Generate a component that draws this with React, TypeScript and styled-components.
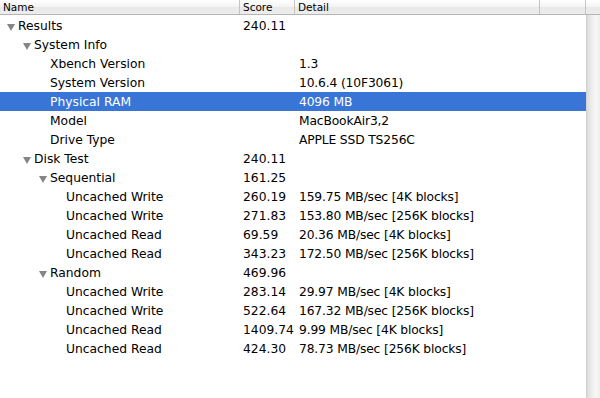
import React from "react";
import styled, { createGlobalStyle } from "styled-components";

const Global = createGlobalStyle`
  html, body { margin: 0; padding: 0; background: #fff; }
  body { font-family: "DejaVu Sans", "Liberation Sans", sans-serif; }
`;

type Row = { name: string; level: number; score?: string; detail?: string; open?: boolean; selected?: boolean };

const rows: Row[] = [
  { name: "Results", level: 0, score: "240.11", open: true },
  { name: "System Info", level: 1, open: true },
  { name: "Xbench Version", level: 2, detail: "1.3" },
  { name: "System Version", level: 2, detail: "10.6.4 (10F3061)" },
  { name: "Physical RAM", level: 2, detail: "4096 MB", selected: true },
  { name: "Model", level: 2, detail: "MacBookAir3,2" },
  { name: "Drive Type", level: 2, detail: "APPLE SSD TS256C" },
  { name: "Disk Test", level: 1, score: "240.11", open: true },
  { name: "Sequential", level: 2, score: "161.25", open: true },
  { name: "Uncached Write", level: 3, score: "260.19", detail: "159.75 MB/sec [4K blocks]" },
  { name: "Uncached Write", level: 3, score: "271.83", detail: "153.80 MB/sec [256K blocks]" },
  { name: "Uncached Read", level: 3, score: "69.59", detail: "20.36 MB/sec [4K blocks]" },
  { name: "Uncached Read", level: 3, score: "343.23", detail: "172.50 MB/sec [256K blocks]" },
  { name: "Random", level: 2, score: "469.96", open: true },
  { name: "Uncached Write", level: 3, score: "283.14", detail: "29.97 MB/sec [4K blocks]" },
  { name: "Uncached Write", level: 3, score: "522.64", detail: "167.32 MB/sec [256K blocks]" },
  { name: "Uncached Read", level: 3, score: "1409.74", detail: "9.99 MB/sec [4K blocks]" },
  { name: "Uncached Read", level: 3, score: "424.30", detail: "78.73 MB/sec [256K blocks]" },
];

const Window = styled.div`
  width: 600px;
  height: 398px;
  display: grid;
  grid-template-rows: 15px 1fr;
  overflow: hidden;
  background: #fff;
`;

const Header = styled.div`
  display: grid;
  grid-template-columns: 239px 55px 245px 46px 1fr;
  background: linear-gradient(#ffffff, #f3f3f3 50%, #e9e9e9 51%, #ececec);
  border-bottom: 1px solid #b5b5b5;
  box-sizing: border-box;
`;

const HeaderCell = styled.div<{ $first?: boolean }>`
  font-size: 10.5px;
  line-height: 14px;
  color: #000;
  padding-left: 3px;
  border-left: ${(p) => (p.$first ? "none" : "1px solid #c4c4c4")};
  white-space: nowrap;
  overflow: hidden;
`;

const Body = styled.div`
  display: grid;
  grid-template-columns: 586px 14px;
`;

const List = styled.div`
  display: flex;
  flex-direction: column;
  padding-top: 1px;
`;

const Track = styled.div`
  background: linear-gradient(90deg, #dcdcdc, #efefef 40%, #f7f7f7 70%, #efefef);
  border-left: 1px solid #d0d0d0;
`;

const RowLine = styled.div<{ $selected?: boolean }>`
  display: grid;
  grid-template-columns: 239px 55px 1fr;
  height: 19px;
  align-items: center;
  font-size: 12.3px;
  color: ${(p) => (p.$selected ? "#fff" : "#000")};
  background: ${(p) => (p.$selected ? "#3875d7" : "transparent")};
  white-space: nowrap;
`;

const NameCell = styled.div<{ $level: number }>`
  display: flex;
  align-items: center;
  padding-left: ${(p) => 18 + p.$level * 16}px;
  position: relative;
  overflow: hidden;
`;

const Disclosure = styled.span<{ $level: number }>`
  position: absolute;
  left: ${(p) => 7 + p.$level * 16}px;
  top: 5px;
  width: 0;
  height: 0;
  border-left: 4.5px solid transparent;
  border-right: 4.5px solid transparent;
  border-top: 7px solid #858585;
`;

const ScoreCell = styled.div`
  padding-left: 4px;
  overflow: hidden;
`;

const DetailCell = styled.div`
  padding-left: 5px;
  overflow: hidden;
  letter-spacing: -0.15px;
`;

export default function App() {
  return (
    <>
      <Global />
      <Window>
        <Header>
          <HeaderCell $first>Name</HeaderCell>
          <HeaderCell>Score</HeaderCell>
          <HeaderCell>Detail</HeaderCell>
          <HeaderCell />
          <HeaderCell />
        </Header>
        <Body>
          <List>
            {rows.map((r, i) => (
              <RowLine key={i} $selected={r.selected}>
                <NameCell $level={r.level}>
                  {r.open && <Disclosure $level={r.level} />}
                  {r.name}
                </NameCell>
                <ScoreCell>{r.score ?? ""}</ScoreCell>
                <DetailCell>{r.detail ?? ""}</DetailCell>
              </RowLine>
            ))}
          </List>
          <Track />
        </Body>
      </Window>
    </>
  );
}
